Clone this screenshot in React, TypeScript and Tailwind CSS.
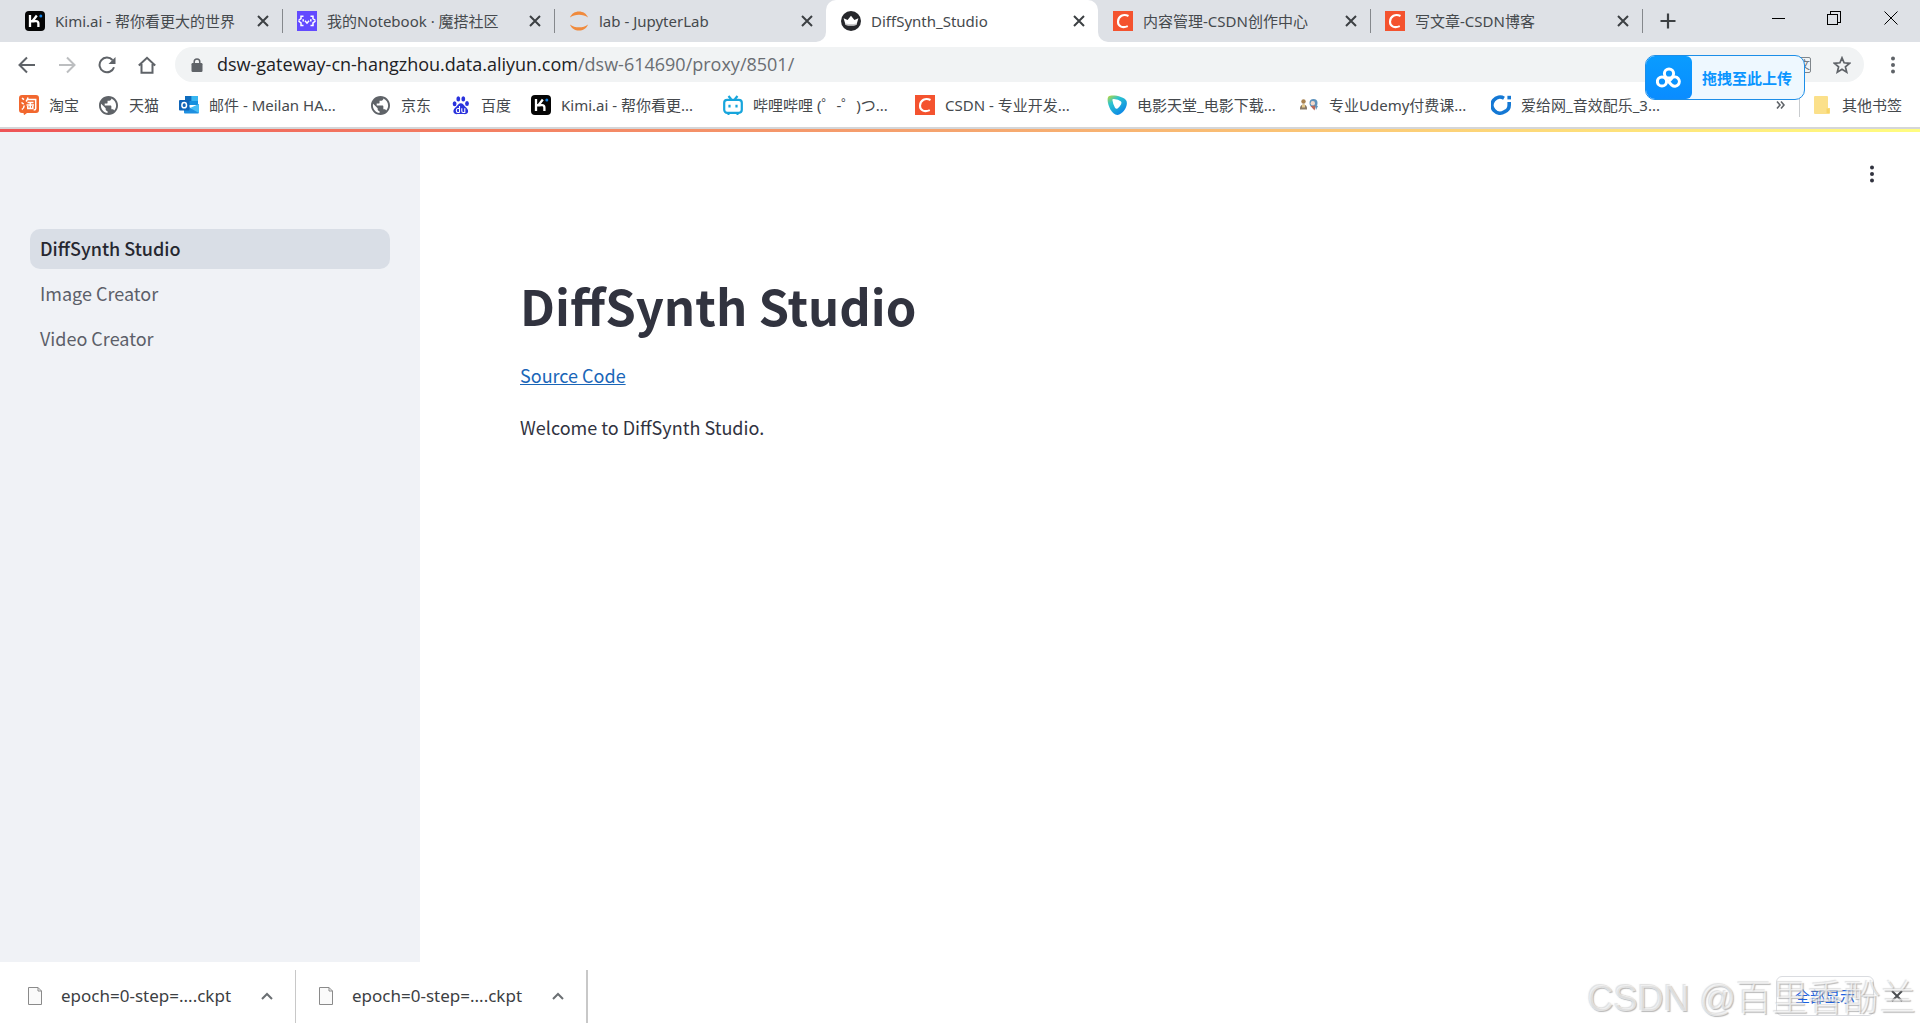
import React from "react";
import type { ReactNode } from "react";

const sans = "font-['Noto_Sans','Noto_Sans_CJK_SC',sans-serif]";

function KimiIcon() {
  return (
    <svg viewBox="0 0 20 20" className="size-5 shrink-0">
      <rect width="20" height="20" rx="4" fill="#050505" />
      <path d="M5 4v12M11.800 4.500L7.500 10.200h3.600q2.300 0 2.300 2.400V16" fill="none" stroke="#fff" strokeWidth="2.300" />
      <path d="M5.500 10.200h4" stroke="#fff" strokeWidth="2.300" />
      <circle cx="15.800" cy="5" r="1.500" fill="#1683e6" />
    </svg>
  );
}

function ModelScopeIcon() {
  return (
    <svg viewBox="0 0 20 20" className="size-5 shrink-0">
      <rect width="20" height="20" fill="#624aff" />
      <g fill="none" stroke="#fff" strokeWidth="1.500">
        <path d="M6.500 5.200H4v2.500L1.500 9.500M1.500 10L4 11.800v2.600h2.500M13.500 5.200H16v2.500l2.500 1.800M18.500 10L16 11.800v2.600h-2.500" />
        <path d="M6.200 8.300v2.200M13.800 8.300v2.200M8 9.800l2 2.400 2-2.400" />
      </g>
    </svg>
  );
}

function JupyterIcon() {
  return (
    <svg viewBox="0 0 20 20" className="size-5 shrink-0" fill="#f08a3c">
      <path d="M1 6.600C2.600 2.600 6 .6 10 .6s7.400 2 9 6C16.500 4.600 13.500 3.700 10 3.700S3.500 4.600 1 6.600z" />
      <path d="M1 13.400c1.600 4 5 6 9 6s7.400-2 9-6c-2.500 2-5.500 2.900-9 2.900s-6.500-.9-9-2.900z" />
    </svg>
  );
}

function CrownIcon() {
  return (
    <svg viewBox="0 0 20 20" className="size-5 shrink-0">
      <circle cx="10" cy="10" r="10" fill="#26272b" />
      <path d="M2.600 7.200l4 1.700L10 4.800l3.400 4.100 4-1.700-2 6.800q-5.400 1.200-10.800 0z" fill="#fff" />
      <path d="M4.600 12.400q5.400 1.400 10.800 0l-.4 1.600q-5 1.200-10 0z" fill="#c9c9cb" />
    </svg>
  );
}

function CsdnIcon() {
  return (
    <svg viewBox="0 0 20 20" className="size-5 shrink-0">
      <rect width="20" height="20" fill="#f4532f" />
      <path d="M15.500 5C10.500 2.400 5.200 5 5 10.600c-.1 5.200 4.800 6.700 9.800 4.500" fill="none" stroke="#fff" strokeWidth="2.100" />
    </svg>
  );
}

function TaobaoIcon() {
  return (
    <svg viewBox="0 0 20 20" className="size-5 shrink-0">
      <path d="M3 0h14a3 3 0 013 3v12a3 3 0 01-3 3H8l-3 2.200L4.500 18H3a3 3 0 01-3-3V3a3 3 0 013-3z" fill="#f2672e" />
      <g fill="none" stroke="#fff" strokeWidth="1.500">
        <path d="M3 3.200l2 1.500M2.500 7.500l2.200 1.600M2.800 14.500Q5 13.500 5.200 10.500" />
        <path d="M9 2.500Q8.500 5 7 6.500M8.500 4.500h8.200v9.300q0 1.200-2 1.200M8.500 7.500h6M7.500 10h7.500M11.300 7.500v5.500M8.800 11v2.500h5V11" />
      </g>
    </svg>
  );
}

function GlobeIcon() {
  return (
    <svg viewBox="2 2 20 20" className="mr-px size-[19px] shrink-0" fill="#5f6368">
      <path d="M12 2C6.480 2 2 6.480 2 12s4.480 10 10 10 10-4.480 10-10S17.520 2 12 2zm-1 17.930c-3.950-.49-7-3.850-7-7.930 0-.62.080-1.210.210-1.790L9 15v1c0 1.100.9 2 2 2v1.930zm6.900-2.540c-.26-.81-1-1.390-1.900-1.390h-1v-3c0-.55-.45-1-1-1H8v-2h2c.55 0 1-.45 1-1V7h2c1.100 0 2-.9 2-2v-.41c2.930 1.190 5 4.060 5 7.410 0 2.080-.8 3.970-2.100 5.390z" />
    </svg>
  );
}

function OutlookIcon() {
  return (
    <svg viewBox="0 0 20 20" className="size-5 shrink-0">
      <path d="M6 1h13v9H6z" fill="#1490df" />
      <path d="M6 1h6.500v5H6z" fill="#0f6cbd" />
      <path d="M12.500 1H19v5h-6.500z" fill="#38b6f1" />
      <path d="M5 9l7.500 4.500L20 9v8.500q0 1-1 1H6q-1 0-1-1z" fill="#1e8fe0" />
      <path d="M20 9v9L11 13z" fill="#45bdf5" />
      <rect y="5" width="10.500" height="10.500" rx="1" fill="#0f64b8" />
      <ellipse cx="5.200" cy="10.200" rx="2.300" ry="2.600" fill="none" stroke="#fff" strokeWidth="1.500" />
    </svg>
  );
}

function BaiduIcon() {
  return (
    <svg viewBox="0 0 20 20" className="size-5 shrink-0">
      <g fill="#2a32dd">
        <ellipse cx="3.600" cy="8.800" rx="1.900" ry="2.500" />
        <ellipse cx="7.300" cy="3.900" rx="1.900" ry="2.700" />
        <ellipse cx="12.300" cy="3.900" rx="1.900" ry="2.700" />
        <ellipse cx="16" cy="8.400" rx="1.900" ry="2.500" />
        <path d="M9.800 8.200c2 0 2.800 1.800 4.200 3.200 1.700 1.600 3.300 2.600 3.100 5-.2 2.300-2.200 3-4.300 2.700-2-.3-4-.3-6 0-2.100.3-4.200-.4-4.400-2.700-.2-2.400 1.500-3.400 3.200-5C7 10 7.800 8.200 9.800 8.200z" />
      </g>
      <path d="M8.500 11v6.500M8.500 13.500H6.800q-1.500 0-1.500 2t1.500 2h1.700M10.800 13.200v2.900q0 1.400 1.300 1.400h1.700v-4.300" fill="none" stroke="#fff" strokeWidth="1.100" />
    </svg>
  );
}

function BilibiliIcon() {
  return (
    <svg viewBox="0 0 20 20" className="size-5 shrink-0" fill="none" stroke="#17a5dc" strokeWidth="2.200">
      <rect x="1.200" y="4.800" width="17.600" height="13" rx="3" />
      <path d="M5.500 1l2.700 3.300M14.500 1l-2.700 3.300M6.500 9.800v2.600M13.500 9.800v2.600M4.500 18.800h2M13.500 18.800h2" />
    </svg>
  );
}

function MovieIcon() {
  return (
    <svg viewBox="0 0 20 20" className="size-5 shrink-0">
      <defs>
        <linearGradient id="movie" x1="0" y1="0" x2=".7" y2="1">
          <stop offset="0" stopColor="#c3d832" />
          <stop offset=".35" stopColor="#2cc4cf" />
          <stop offset="1" stopColor="#0a84e8" />
        </linearGradient>
      </defs>
      <path d="M1.500 1.500C4-.8 17 .8 19.500 6c1.800 5-3.500 13.300-9 13.900C3.500 20.200-1.500 5 1.500 1.500z" fill="url(#movie)" />
      <path d="M5.500 5.500q-1-1.800 1.500-1.500 4.500.3 7 2.500 1 1.200 0 3-1.500 2.500-3.500 4-1.500.7-2.500-.8Q6 9.500 5.500 5.500z" fill="#fff" />
    </svg>
  );
}

function UdemyIcon() {
  return (
    <svg viewBox="0 0 20 20" className="size-5 shrink-0">
      <circle cx="4.500" cy="6.500" r="2.200" fill="#a8814f" />
      <path d="M1 14.500q-.5-4.500 3.500-5 4 .5 3.500 5z" fill="#8a7a66" />
      <path d="M3 9.500h3v3H3z" fill="#e6c98a" />
      <circle cx="14.500" cy="8" r="4" fill="#5f93bd" />
      <circle cx="13.800" cy="8.200" r="2.200" fill="#f3d9cb" />
      <path d="M11.500 11l5.500-.5-1.500 5z" fill="#b9685a" />
      <path d="M16 10l3 1-2 4z" fill="#5f93bd" />
    </svg>
  );
}

function AigeiIcon() {
  return (
    <svg viewBox="0 0 20 20" className="size-5 shrink-0" fill="none" stroke="#1478d4" strokeWidth="3.600">
      <path d="M13 3.200A8 8 0 1013.500 16.800Q18.200 15 18.200 10V7" />
      <path d="M16.400 2.600H20" />
    </svg>
  );
}

function TabClose() {
  return (
    <svg viewBox="0 0 12 12" className="size-3" stroke="#3c4043" strokeWidth="2">
      <path d="M1 1l10 10M11 1L1 11" />
    </svg>
  );
}

function Dots({ color }: { color: string }) {
  return (
    <svg viewBox="0 0 6 18" className="h-[18px] w-1.5" fill={color}>
      <circle cx="3" cy="2.500" r="2" />
      <circle cx="3" cy="9" r="2" />
      <circle cx="3" cy="15.500" r="2" />
    </svg>
  );
}

const tabs: { title: string; icon: ReactNode; active?: boolean; line?: boolean }[] = [
  { title: "Kimi.ai - 帮你看更大的世界", icon: <KimiIcon />, line: true },
  { title: "我的Notebook · 魔搭社区", icon: <ModelScopeIcon />, line: true },
  { title: "lab - JupyterLab", icon: <JupyterIcon /> },
  { title: "DiffSynth_Studio", icon: <CrownIcon />, active: true },
  { title: "内容管理-CSDN创作中心", icon: <CsdnIcon />, line: true },
  { title: "写文章-CSDN博客", icon: <CsdnIcon />, line: true },
];

const bookmarks: { title: string; icon: ReactNode; short?: boolean }[] = [
  { title: "淘宝", icon: <TaobaoIcon />, short: true },
  { title: "天猫", icon: <GlobeIcon />, short: true },
  { title: "邮件 - Meilan HA...", icon: <OutlookIcon /> },
  { title: "京东", icon: <GlobeIcon />, short: true },
  { title: "百度", icon: <BaiduIcon />, short: true },
  { title: "Kimi.ai - 帮你看更...", icon: <KimiIcon /> },
  { title: "哔哩哔哩 (゜-゜)つ...", icon: <BilibiliIcon /> },
  { title: "CSDN - 专业开发...", icon: <CsdnIcon /> },
  { title: "电影天堂_电影下载...", icon: <MovieIcon /> },
  { title: "专业Udemy付费课...", icon: <UdemyIcon /> },
  { title: "爱给网_音效配乐_3...", icon: <AigeiIcon /> },
];

function TabStrip() {
  return (
    <header className="flex h-[42px] bg-[#dee1e6] pl-2.5">
      {tabs.map((t) => (
        <div
          key={t.title}
          className={
            t.active
              ? "relative flex w-[272px] items-center rounded-t-[10px] bg-white pr-[13px] pl-[15px]"
              : "relative flex w-[272px] items-center pr-[13px] pl-[15px]"
          }
        >
          {t.active && (
            <>
              <span className="absolute bottom-0 -left-2.5 size-2.5 bg-white">
                <span className="block size-full rounded-br-[10px] bg-[#dee1e6]" />
              </span>
              <span className="absolute -right-2.5 bottom-0 size-2.5 bg-white">
                <span className="block size-full rounded-bl-[10px] bg-[#dee1e6]" />
              </span>
            </>
          )}
          <a href="#" className="flex min-w-0 flex-1 items-center gap-2.5 text-[15px] whitespace-nowrap text-[#45494d]">
            {t.icon}
            <span className="truncate">{t.title}</span>
          </a>
          <button aria-label={"关闭 " + t.title} className="flex size-3 items-center justify-center">
            <TabClose />
          </button>
          {t.line && <span className="absolute top-[9px] -right-px h-6 w-px bg-[#85888c]" />}
        </div>
      ))}
      <button aria-label="新标签页" className="ml-4 flex w-5 items-center justify-center">
        <svg viewBox="0 0 16 16" className="size-4" stroke="#3c4043" strokeWidth="2.200">
          <path d="M8 .5v15M.5 8h15" />
        </svg>
      </button>
      <div className="ml-auto flex h-9 text-black">
        <button aria-label="最小化" className="flex w-14 items-center justify-center">
          <span className="h-px w-[13px] bg-black" />
        </button>
        <button aria-label="还原" className="flex w-14 items-center justify-center">
          <svg viewBox="0 0 14 14" className="size-3.5" fill="none" stroke="#000" shapeRendering="crispEdges">
            <path d="M.5 3.500h10v10H.5zM3 3V.5h10.500V11H11" />
          </svg>
        </button>
        <button aria-label="关闭" className="flex w-[58px] items-center justify-center">
          <svg viewBox="0 0 14 14" className="size-3.5" stroke="#000">
            <path d="M.5.5l13 13M13.500.5l-13 13" />
          </svg>
        </button>
      </div>
    </header>
  );
}

function Toolbar() {
  return (
    <div className="flex h-[45px] items-center pr-6 pl-[18px]">
      <nav className="flex w-[157px] gap-[22px]">
        <button aria-label="后退">
          <svg viewBox="0 0 18 18" className="size-[18px]" fill="none" stroke="#5f6368" strokeWidth="2">
            <path d="M17 9H2M9 1.500L1.500 9 9 16.500" />
          </svg>
        </button>
        <button aria-label="前进">
          <svg viewBox="0 0 18 18" className="size-[18px]" fill="none" stroke="#bcbec0" strokeWidth="2">
            <path d="M1 9h15M9 1.500L16.500 9 9 16.500" />
          </svg>
        </button>
        <button aria-label="重新加载">
          <svg viewBox="0 0 18 18" className="size-[18px]" fill="none" stroke="#5f6368" strokeWidth="2">
            <path d="M16 11.200A7.400 7.400 0 1114.500 4" />
            <path d="M17.500 1v7h-7z" fill="#5f6368" stroke="none" />
          </svg>
        </button>
        <button aria-label="主页">
          <svg viewBox="0 0 18 18" className="size-[18px]" fill="none" stroke="#5f6368" strokeWidth="2">
            <path d="M.8 9.500L9 1.800l8.200 7.700M3.500 8v8.800h11V8" />
          </svg>
        </button>
      </nav>
      <div className="flex h-[35px] flex-1 items-center rounded-full bg-[#f1f3f4] pr-[13px] pl-4">
        <svg viewBox="0 0 12 14" className="h-3.5 w-3 shrink-0">
          <rect x=".5" y="5" width="11" height="9" rx="1.200" fill="#5f6368" />
          <path d="M3.200 5.500V3.800a2.800 2.800 0 015.600 0v1.700" fill="none" stroke="#5f6368" strokeWidth="1.500" />
        </svg>
        <a
          href="#"
          className="ml-3.5 pb-0.5 font-['Open_Sans','Noto_Sans_CJK_SC',sans-serif] text-[18px] leading-6 whitespace-nowrap text-[#202124]"
        >
          dsw-gateway-cn-hangzhou.data.aliyun.com<span className="text-[#6a6e73]">/dsw-614690/proxy/8501/</span>
        </a>
        <button aria-label="翻译" className="mr-[22px] ml-auto flex h-4 w-5 items-center justify-end rounded-xs border border-[#80868b] text-[11px] leading-none text-[#5f6368]">
          文
        </button>
        <button aria-label="添加书签">
          <svg viewBox="0 0 18 18" className="size-[18px]" fill="none" stroke="#5f6368" strokeWidth="1.700">
            <path d="M9 1.800l2.100 5 5.400.5-4.100 3.500 1.300 5.300L9 13.200l-4.700 2.900 1.300-5.300L1.500 7.300l5.400-.5z" />
          </svg>
        </button>
      </div>
      <button aria-label="菜单" className="ml-[26px]">
        <Dots color="#5f6368" />
      </button>
    </div>
  );
}

function Bookmarks() {
  return (
    <nav className="flex h-[42px] items-center border-b-2 border-[#d5d6d8] pr-[18px] pb-1 pl-[19px] text-[15px] whitespace-nowrap text-[#45494d]">
      {bookmarks.map((b) => (
        <a key={b.title} href="#" className={b.short ? "flex w-20 items-center gap-2.5" : "flex w-48 items-center gap-2.5"}>
          {b.icon}
          {b.title}
        </a>
      ))}
      <button aria-label="更多书签" className="ml-auto">
        <svg viewBox="0 0 9 8" className="h-2 w-[9px]" fill="none" stroke="#5f6368" strokeWidth="1.600">
          <path d="M1 .5L4 4 1 7.500M5 .5L8 4 5 7.500" />
        </svg>
      </button>
      <span className="mx-[14px] h-6 w-px bg-[#c9cccf]" />
      <a href="#" className="flex items-center gap-3">
        <svg viewBox="0 0 16 18" className="h-[18px] w-4">
          <path d="M0 1q0-1 1-1h12q1 0 1 1v11h2v5q0 1-1 1H1q-1 0-1-1z" fill="#fbe08a" />
          <path d="M12.500 12.500h3V17h-3z" fill="#f7d468" />
        </svg>
        其他书签
      </a>
    </nav>
  );
}

function UploadBadge() {
  return (
    <button className="absolute top-[55px] right-[115px] flex h-[45px] w-40 overflow-hidden rounded-[10px] border border-[#1c8ee8] bg-[#eef8ff]">
      <span className="flex h-full w-[46px] items-center justify-center rounded-r-md bg-linear-to-b from-[#0a9cff] to-[#0a8cff]">
        <svg viewBox="0 0 26 22" className="h-[22px] w-[26px]" fill="none" stroke="#fff" strokeWidth="3">
          <circle cx="13" cy="6.500" r="4.600" />
          <circle cx="6" cy="14.500" r="4.600" />
          <path d="M9.500 11.500L16 18.300a4.600 4.600 0 100-7.400l-4 4.500" />
        </svg>
      </span>
      <span className="flex h-full flex-1 items-center justify-center pt-0.5 pr-0.5 text-[15px] font-bold text-[#0a95ff]">拖拽至此上传</span>
    </button>
  );
}

function Download() {
  return (
    <div className="flex h-[53px] items-center">
      <button className="flex items-center text-[17px] text-[#3c4043]">
        <svg viewBox="0 0 14 18" className="h-[18px] w-3.5" fill="#fafafa" stroke="#8a8a8a">
          <path d="M.5.5h9.500l3.500 3.500v13.500H.5zM10 .5V4h3.500" />
        </svg>
        <span className="ml-[19px] w-[173px] text-left whitespace-nowrap">epoch=0-step=....ckpt</span>
      </button>
      <button aria-label="更多操作" className="ml-[27px]">
        <svg viewBox="0 0 12 8" className="h-2 w-3" fill="none" stroke="#6b6f73" strokeWidth="2">
          <path d="M1 7l5-5 5 5" />
        </svg>
      </button>
    </div>
  );
}

const page = "font-['Noto_Sans_CJK_SC',sans-serif]";

export default function App() {
  return (
    <div className={"relative flex min-h-screen flex-col bg-white " + sans}>
      <TabStrip />
      <Toolbar />
      <Bookmarks />
      <UploadBadge />
      <div className="h-[3px] bg-linear-to-r from-[#ee5457] via-[#f5a56f] to-[#fffd80]" />
      <div className={"flex flex-1 text-[18px] " + page}>
        <aside className="w-[420px] bg-[#f0f2f6] px-[30px] pt-[97px]">
          <ul className="flex flex-col gap-[5px] leading-[38px] text-[#5c5f69]">
            <li>
              <a href="#" className="block rounded-[10px] bg-[#d9dee6] px-2.5 pb-0.5 font-medium text-[#262730]">
                DiffSynth Studio
              </a>
            </li>
            <li>
              <a href="#" className="block rounded-[10px] px-2.5 pb-0.5">Image Creator</a>
            </li>
            <li>
              <a href="#" className="block rounded-[10px] px-2.5 pb-0.5">Video Creator</a>
            </li>
          </ul>
        </aside>
        <main className="relative flex-1 px-[100px] pt-[140px] text-[#31333f]">
          <button aria-label="Main menu" className="absolute top-[33px] right-[45px]">
            <Dots color="#31333f" />
          </button>
          <h1 className="text-[49px] leading-[66px] font-bold">DiffSynth Studio</h1>
          <p className="mt-[21px] leading-8">
            <a href="#" className="text-[#1a66b8] underline">Source Code</a>
          </p>
          <p className="mt-5 leading-8">Welcome to DiffSynth Studio.</p>
        </main>
      </div>
      <footer className="relative flex h-[68px] items-center pr-[17px] pl-7">
        <Download />
        <span className="mr-[23px] ml-[22px] h-[53px] w-px bg-[#c8c8c8]" />
        <Download />
        <span className="ml-[22px] h-[53px] w-0.5 bg-[#c8c8c8]" />
        <button className="ml-auto h-10 w-[98px] rounded-md border border-[#dadce0] text-[15px] text-[#1a5fe0]">全部显示</button>
        <button aria-label="关闭下载栏" className="ml-[17px]">
          <svg viewBox="0 0 12 12" className="size-3" stroke="#4a4d50" strokeWidth="2">
            <path d="M1 1l10 10M11 1L1 11" />
          </svg>
        </button>
        <span className="pointer-events-none absolute right-1 bottom-[3px] font-['Liberation_Sans','Noto_Sans_CJK_SC',sans-serif] text-[36px] leading-[56px] font-light whitespace-nowrap text-white/60 [text-shadow:1px_1px_1px_#88888899,-1px_-1px_1px_#cccccc99]">
          CSDN @百里香酚兰
        </span>
      </footer>
    </div>
  );
}
